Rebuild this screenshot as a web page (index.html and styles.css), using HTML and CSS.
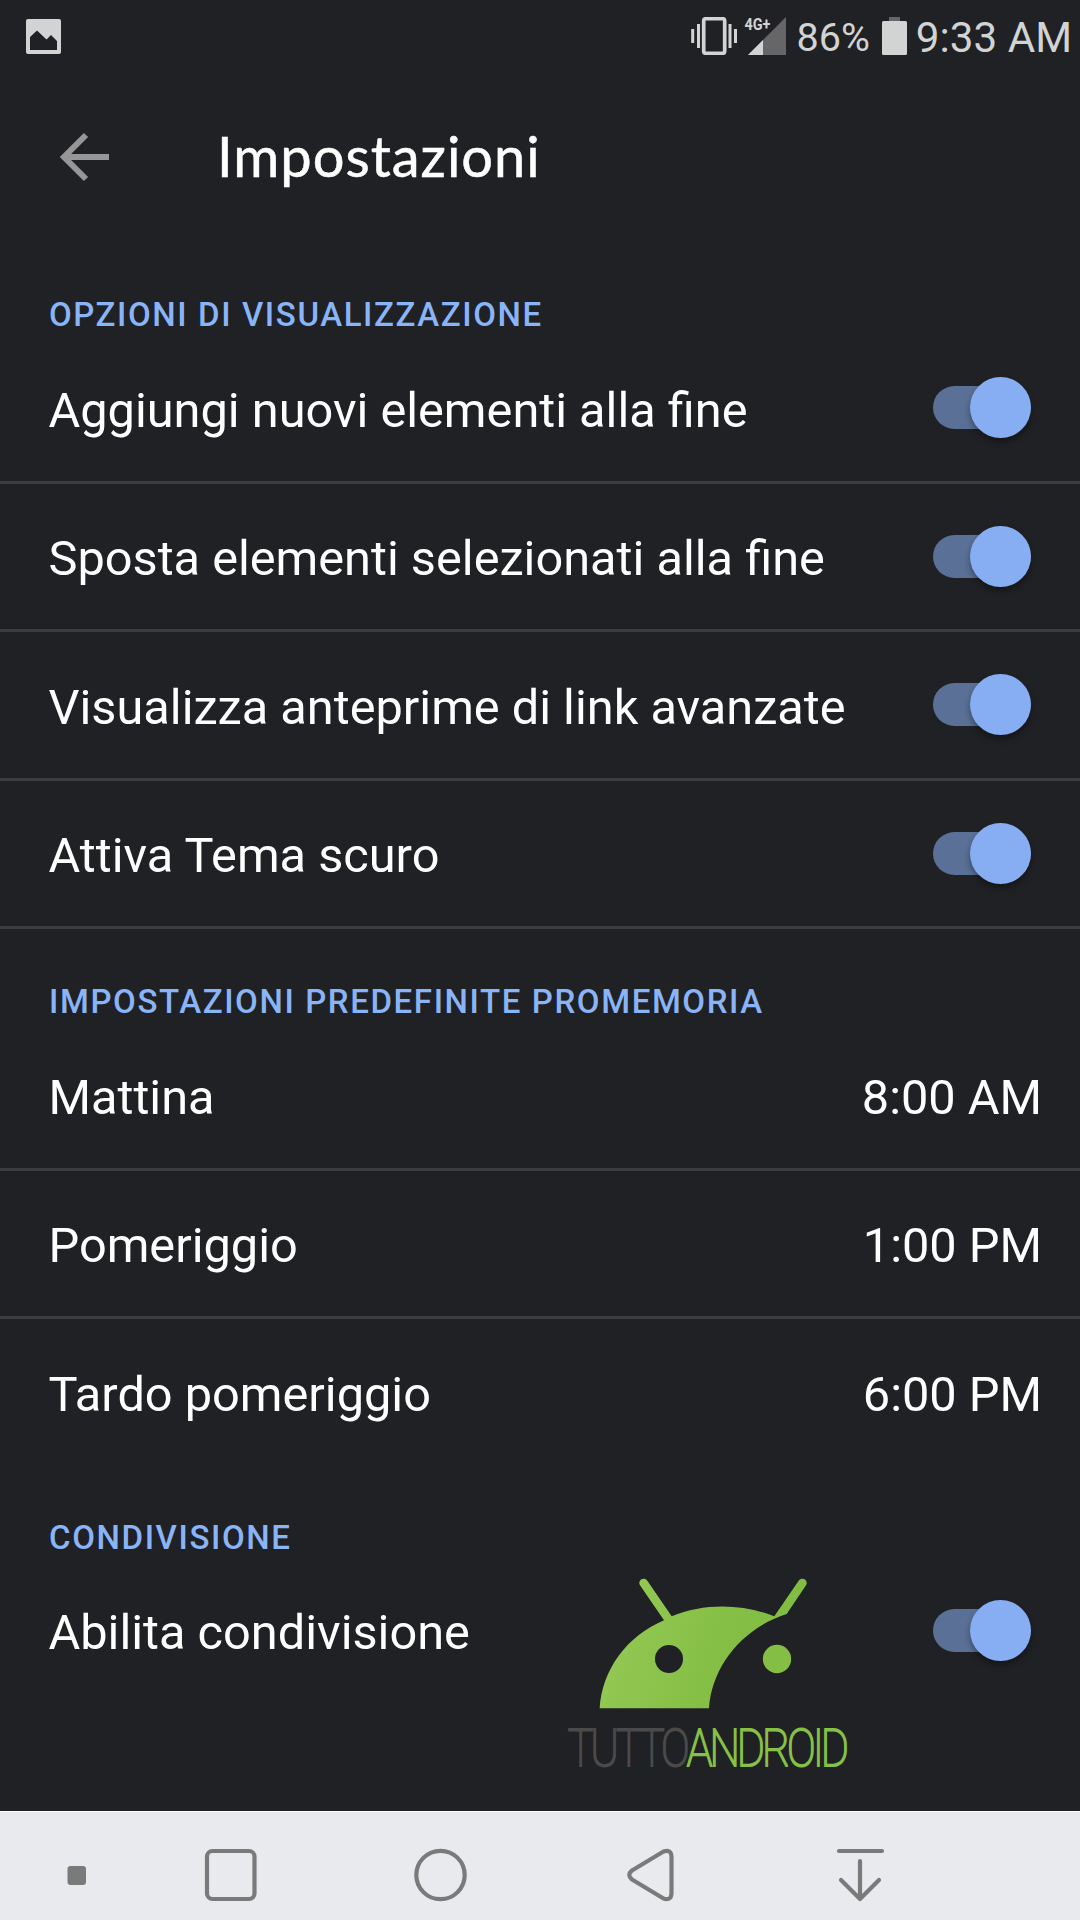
FILE: index.html
```
<!DOCTYPE html>
<html lang="it">
<head>
<meta charset="UTF-8">
<meta name="viewport" content="width=device-width, initial-scale=1.0">
<title>Impostazioni</title>
<link rel="stylesheet" href="styles.css">
</head>
<body>

<div class="screen">
    <header class="status-bar">
        <svg class="icon-picture" width="35" height="35" viewBox="0 0 35 35">
            <path fill="#d2d4d3" fill-rule="evenodd" d="M2 0H33Q35 0 35 2V33Q35 35 33 35H2Q0 35 0 33V2Q0 0 2 0ZM4 18V31H31V22L25 16L20.500 20.500L11 11.500Z"/>
        </svg>
        <div class="status-right">
            <svg class="icon-vibrate" width="46" height="38" viewBox="0 0 46 38">
                <rect x="12.700" y="1.700" width="21" height="34.600" rx="2" fill="none" stroke="#d2d4d3" stroke-width="3.700"/>
                <path stroke="#d2d4d3" stroke-width="3" d="M1.700 12V26M7.500 7V31M39 7V31M44.500 12V26"/>
            </svg>
            <svg class="icon-signal" width="42" height="38" viewBox="0 0 42 38">
                <path fill="#666668" d="M42 0V38H4Z"/>
                <path fill="#d2d4d3" d="M19 23V38H4Z"/>
                <text class="network" x="0.500" y="12.500" textLength="26" lengthAdjust="spacingAndGlyphs">4G+</text>
            </svg>
            <span class="battery-level">86%</span>
            <svg class="icon-battery" width="25" height="38" viewBox="0 0 25 38">
                <path fill="#666668" d="M7 0H18V5H7Z"/>
                <rect y="4" width="25" height="34" rx="1.500" fill="#d2d4d3"/>
            </svg>
            <span class="clock">9:33 AM</span>
        </div>
    </header>

    <div class="toolbar">
        <svg class="back" width="50" height="50" viewBox="0 0 50 50">
            <path fill="none" stroke="#969698" stroke-width="6" d="M49 25H5M26 3L4 25L26 47"/>
        </svg>
        <h1 class="title">Impostazioni</h1>
    </div>

    <main class="settings">
        <h2 class="section-title">OPZIONI DI VISUALIZZAZIONE</h2>
        <div class="row divider">
            <span class="label">Aggiungi nuovi elementi alla fine</span>
            <span class="switch"></span>
        </div>
        <div class="row divider">
            <span class="label">Sposta elementi selezionati alla fine</span>
            <span class="switch"></span>
        </div>
        <div class="row divider">
            <span class="label">Visualizza anteprime di link avanzate</span>
            <span class="switch"></span>
        </div>
        <div class="row divider">
            <span class="label">Attiva Tema scuro</span>
            <span class="switch"></span>
        </div>

        <h2 class="section-title">IMPOSTAZIONI PREDEFINITE PROMEMORIA</h2>
        <div class="row divider">
            <span class="label">Mattina</span>
            <span class="time">8:00 AM</span>
        </div>
        <div class="row divider">
            <span class="label">Pomeriggio</span>
            <span class="time">1:00 PM</span>
        </div>
        <div class="row">
            <span class="label">Tardo pomeriggio</span>
            <span class="time">6:00 PM</span>
        </div>

        <h2 class="section-title last">CONDIVISIONE</h2>
        <div class="row">
            <span class="label">Abilita condivisione</span>
            <span class="switch"></span>
        </div>
    </main>

    <!-- watermark over the last section -->
    <svg class="watermark" width="320" height="230" viewBox="0 0 960 690">
        <defs>
            <linearGradient id="green" gradientUnits="userSpaceOnUse" x1="120" y1="200" x2="740" y2="400">
                <stop offset="0" stop-color="#94c955"/>
                <stop offset="0.600" stop-color="#84be44"/>
                <stop offset="1" stop-color="#80bc42"/>
            </linearGradient>
        </defs>
        <path fill="url(#green)" fill-rule="evenodd" d="M119 445C126 330 200 228 312 181L240 76A13 13 0 0 1 262 62L335 169C430 130 545 130 643 169L716 62A13 13 0 0 1 738 76L680 162C545 205 455 320 447 445ZM285 297A42 42 0 1 0 369 297A42 42 0 1 0 285 297Z"/>
        <circle cx="651" cy="297" r="42.500" fill="#84be44"/>
        <text class="brand" x="23" y="619" textLength="835" lengthAdjust="spacingAndGlyphs"><tspan class="tutto">TUTTO</tspan><tspan class="android">ANDROID</tspan></text>
    </svg>

    <nav class="nav-bar">
        <svg width="1080" height="108" viewBox="0 0 1080 108">
            <rect x="67.500" y="54" width="18.500" height="19" rx="3" fill="#797b7a"/>
            <g fill="none" stroke="#797b7a" stroke-width="4.200" stroke-linecap="round" stroke-linejoin="round">
                <rect x="207" y="39" width="47.500" height="48" rx="5.500"/>
                <circle cx="440.500" cy="63" r="24.200"/>
                <path d="M663.500 39.500L632 58.500Q626.500 63 632 67.500L663.500 86.500Q671.500 89 671.500 81V45Q671.500 37 663.500 39.500Z"/>
                <path d="M839 39H882M860 49V86M841 68L860 87L879 68"/>
            </g>
        </svg>
    </nav>
</div>

</body>
</html>
```
FILE: styles.css
```
* {
    box-sizing: border-box;
}

body {
    margin: 0;
    background-color: #202124;
    font-family: Roboto, sans-serif;
    color: #fff;
}

.screen {
    position: relative;
    display: flex;
    flex-direction: column;
    width: 1080px;
    height: 1920px;
    overflow: hidden;
}

.status-bar {
    display: flex;
    justify-content: space-between;
    align-items: center;
    height: 72px;
    padding: 0 8px 0 26px;
    color: #d2d4d3;
}

.status-right {
    display: flex;
    align-items: center;
}

.icon-signal {
    margin-left: 7px;
    overflow: visible;
}

.network {
    font-size: 16.500px;
    font-weight: 700;
    fill: #d2d4d3;
}

.battery-level {
    margin: 3px 12px 0 10px;
    font-size: 39.500px;
}

.clock {
    margin: 2px 0 0 9px;
    font-size: 42.200px;
}

.toolbar {
    display: flex;
    align-items: center;
    height: 170px;
    padding: 0 60px;
}

.title {
    margin: -4px 0 0 107px;
    font-family: Lato, Roboto, sans-serif;
    font-size: 56px;
    font-weight: 400;
    letter-spacing: 1px;
    -webkit-text-stroke: 0.500px #fff;
}

.settings {
    flex: 1;
}

.section-title {
    height: 93px;
    margin: 0;
    padding: 53px 49px 0;
    font-size: 33px;
    font-weight: 500;
    line-height: 40px;
    letter-spacing: 1.600px;
    color: #8ab4f8;
}

.section-title.last {
    height: 90px;
    padding-top: 50px;
}

.row {
    display: flex;
    justify-content: space-between;
    align-items: center;
    height: 148.500px;
    padding: 0 38px 0 48.500px;
    border-bottom: 3px solid transparent;
    font-size: 48.700px;
}

.divider {
    border-color: #3c3d41;
}

.label, .time {
    margin-top: 5px;
}

/* track with the thumb on the right */
.switch {
    position: relative;
    width: 98px;
    height: 43px;
    margin-right: 11px;
    border-radius: 22px;
    background-color: #5a7096;
}

.switch::after {
    content: "";
    position: absolute;
    top: -9px;
    right: 0;
    width: 61px;
    height: 61px;
    border-radius: 50%;
    background-color: #87aef3;
    box-shadow: 0 4px 6px rgba(0, 0, 0, 0.35);
}

.watermark {
    position: absolute;
    top: 1560px;
    left: 560px;
    overflow: visible;
}

.brand {
    font-size: 158px;
    font-weight: 100;
    letter-spacing: -11px;
    stroke-width: 6px;
}

.tutto {
    fill: #4a4a4a;
    stroke: #4a4a4a;
}

.android {
    fill: #86c046;
    stroke: #86c046;
}

.nav-bar {
    height: 109px;
    background-color: #e9eaed;
    border-top: 1px solid #fff;
}

.nav-bar svg {
    display: block;
}
```
